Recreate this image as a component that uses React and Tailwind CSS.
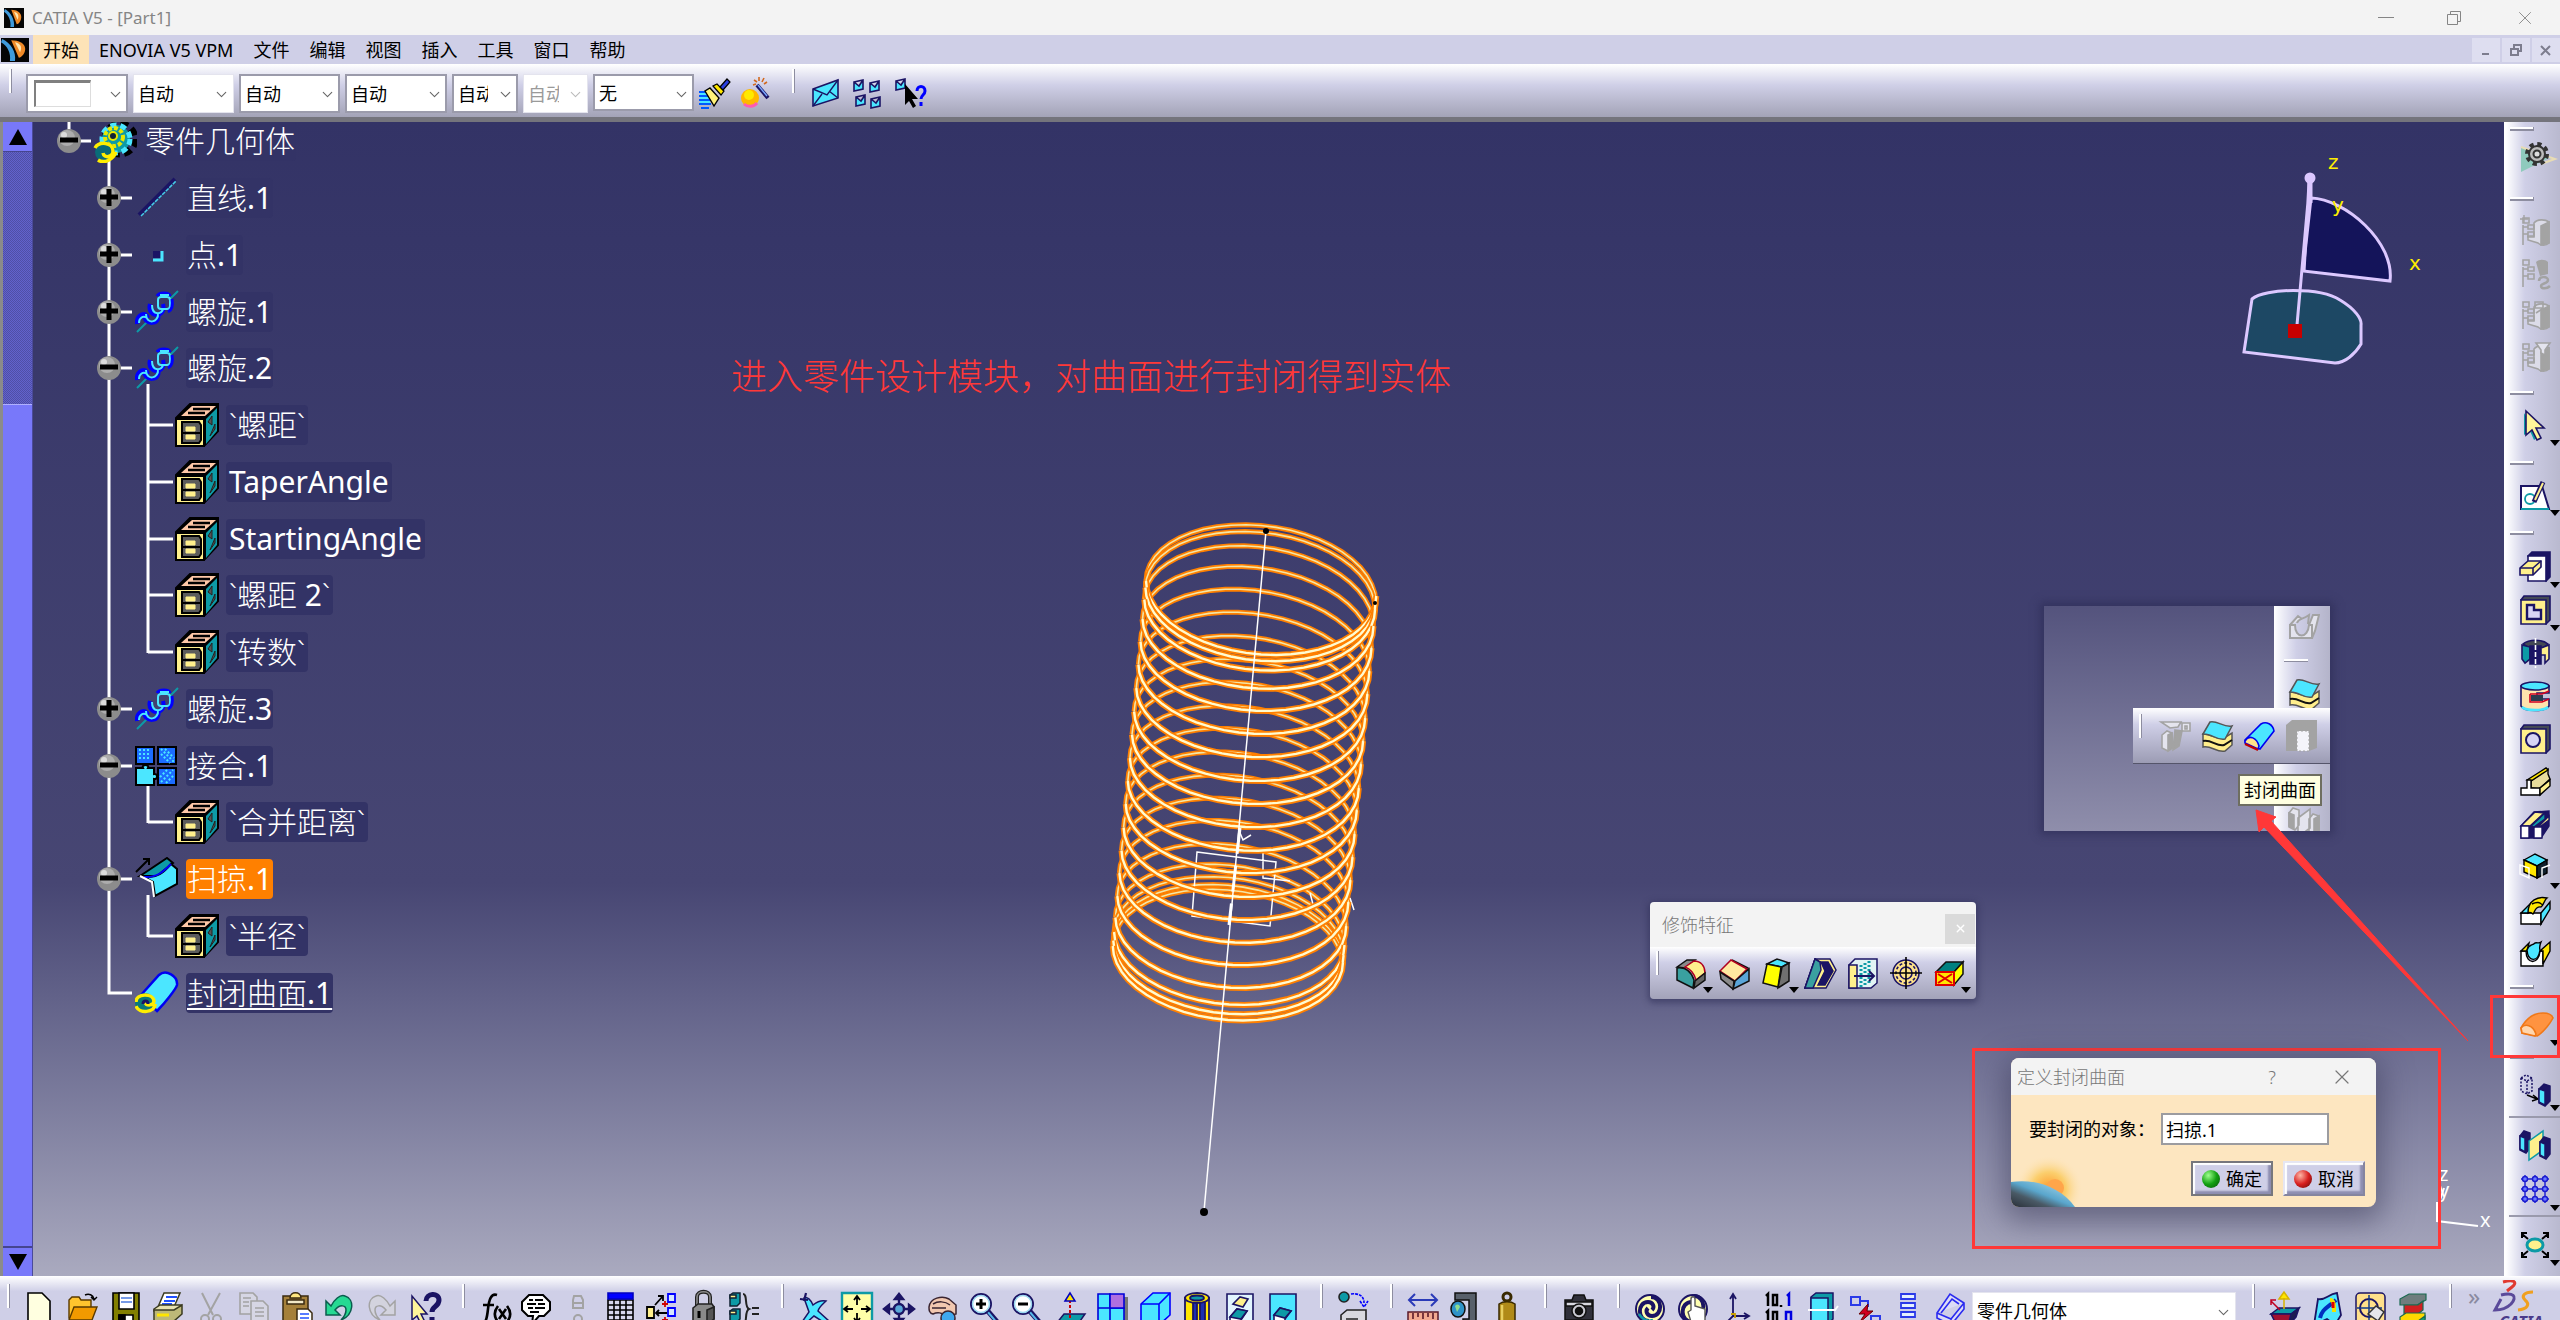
import { ChevronDown, X } from 'lucide-react'

const N = '#1b1464'
const CYAN = '#4be6ff'
const CREAM = '#fff08c'
const TEAL = '#0d9aa6'
const GREY = '#a3a3a3'

const spec = (
  <g fill="none" stroke={GREY} strokeWidth="1.6">
    <path d="M4 3h6v5H4zM4 10v20M4 19h5M4 12h5M9 10h6v4H9zM9 17h6v5H9z" />
  </g>
)

const body = (
  <g stroke={GREY} strokeWidth="1.6">
    <path d="M15 8c3-4 11-4 15-1v21c-3 3-8 3-11 0l-10-3v-4h6z" fill="#dcdce8" />
    <path d="M22 11l8-4v21l-8 2z" fill={GREY} />
  </g>
)

// 32 x 32 drawings
const icons = {
  brush: (
    <g>
      <path d="M1 15h12M1 19h13M1 23h15M1 27h12M3 31h8" stroke="#0059ff" strokeWidth="2" />
      <path d="M2 17h9M2 21h10M2 25h10" stroke={CYAN} strokeWidth="2" />
      <path d="M12 11l9 10-5 8-9-15z" fill="#fff27a" stroke="#000" strokeWidth="1.4" />
      <path d="M15 9l8 9 3-4-7-7z" fill="#ffe600" stroke="#000" strokeWidth="1.2" />
      <path d="M22 10l7-8 3 3-7 8z" fill="#2a3fe0" stroke="#000" strokeWidth="1.2" />
    </g>
  ),
  wand: (
    <g>
      <circle cx="11" cy="21" r="9" fill="#ffb800" />
      <circle cx="10" cy="18" r="5" fill="#ffea00" />
      <path d="M5 27a9 9 0 0 0 13-1" stroke="#ff5cb0" strokeWidth="3" fill="none" />
      <path d="M18 8l11 13" stroke={N} strokeWidth="4" />
      <path d="M19 8l9 11" stroke="#7aa8ff" strokeWidth="1.4" />
      <path d="M15 3l3 2M20 0v4M25 1l-2 4M28 5l-3 2M14 8l3-1" stroke="#d2691e" strokeWidth="1.6" />
    </g>
  ),
  mail: (
    <g>
      <path d="M3 12L28 3v18L3 29z" fill={CYAN} stroke={N} strokeWidth="1.6" />
      <path d="M3 12l14 6L28 3M3 29l9-12M28 21l-9-7" fill="none" stroke={N} strokeWidth="1.4" />
    </g>
  ),
  mailGrid: (
    <g fill={CYAN} stroke={N} strokeWidth="1.6">
      <path d="M2 5l9-2v9l-9 2zM2 5l5 4 4-6M18 6l9-2v9l-9 2zM18 6l5 4 4-6M4 20l9-2v9l-9 2zM4 20l5 4 4-6M19 22l9-2v9l-9 2zM19 22l5 4 4-6" />
    </g>
  ),
  mailHelp: (
    <g>
      <path d="M2 4l9-2v9l-9 2zM2 4l5 4 4-6" fill={CYAN} stroke={N} strokeWidth="1.6" />
      <path d="M11 7v21l4-4 4 7 3-2-4-7h6z" fill="#000" />
      <path d="M23 14c0-6 8-6 8 0 0 4-4 4-4 8M27 25v4" fill="none" stroke="#0000ff" strokeWidth="3" />
    </g>
  ),
  gear: (
    <g>
      <path d="M2 6l30 10L2 31z" fill="#8fcabd" />
      <path d="M2 6l34 12-14 5" fill="none" stroke="#e8dcb4" strokeWidth="2" />
      <circle cx="18" cy="13" r="10" fill="none" stroke="#333" strokeWidth="4" strokeDasharray="4.2 3.65" />
      <circle cx="18" cy="13" r="8" fill="#bbb" stroke="#333" strokeWidth="2" />
      <circle cx="18" cy="13" r="3.5" fill="#ddd" stroke="#333" strokeWidth="2" />
    </g>
  ),
  specNew: <g>{body}{spec}<path d="M1 4h8M5 0v8" stroke={GREY} strokeWidth="1.4" /></g>,
  specLink: <g>{spec}<path d="M17 5c3-3 9-3 12 0v12l-8 2z" fill={GREY} /><path d="M20 24c0-5 9-5 9-1s-7 3-7 6 6 3 9 0" fill="none" stroke={GREY} strokeWidth="2.5" /></g>,
  specBox: <g>{body}{spec}<path d="M16 3h8v6h-8zM17 14l6-4h7" fill="none" stroke={GREY} strokeWidth="1.6" /></g>,
  specFilter: <g>{body}{spec}<path d="M17 2h14l-5 7v5l-4-2V9z" fill="#e4e4ee" stroke={GREY} strokeWidth="1.6" /></g>,
  cursor: (
    <g>
      <path d="M5 4v22l6-4 4 9 4-3" fill={TEAL} />
      <path d="M7 2l18 17h-8l5 10-4 2-5-10-6 5z" fill="#fff59a" stroke={N} strokeWidth="1.6" />
    </g>
  ),
  sketch: (
    <g>
      <path d="M2 7h21l7 23H2z" fill="#fff" stroke={N} strokeWidth="2" />
      <path d="M2 30h28" stroke={TEAL} strokeWidth="2" />
      <circle cx="11" cy="20" r="5" fill="none" stroke={TEAL} strokeWidth="1.8" />
      <path d="M15 23l9-20" stroke={N} strokeWidth="5" />
      <path d="M16 21l8-17" stroke={CREAM} strokeWidth="2" />
    </g>
  ),
  pad: (
    <g stroke={N} strokeWidth="1.6">
      <path d="M9 5l4-4h18v25l-4 4z" fill={N} />
      <path d="M9 5h18v25H9z" fill="#fff" />
      <path d="M1 17l8-7h13v6l-8 8H1z" fill={CREAM} />
      <path d="M1 17h13l8-7M14 17v7" fill="none" />
    </g>
  ),
  pocket: (
    <g stroke={N} strokeWidth="1.6">
      <path d="M2 6l3-4h26v24l-4 4z" fill="#444a55" />
      <path d="M2 6h25v24H2z" fill={CREAM} />
      <path d="M8 11h7v5h7v9H8z" fill="#d8d4f4" strokeWidth="2.4" />
    </g>
  ),
  shaft: (
    <g stroke={N} strokeWidth="1.6">
      <path d="M4 7c6-5 19-5 25 0l-5 4h-14z" fill="#444a55" />
      <path d="M3 8l8 2v12l-5 4-3-4z" fill={TEAL} />
      <path d="M11 9h11v18H11z" fill={N} />
      <path d="M22 11l8-3v14l-4 4v-8h-4z" fill={CREAM} />
      <path d="M16.500 1v30" stroke="#fff" strokeDasharray="5 2" />
    </g>
  ),
  groove: (
    <g strokeWidth="1.6">
      <path d="M2 6v20c4 6 24 6 28 0v-7H18v-6h12V6z" fill="#ffe3ad" stroke={N} />
      <ellipse cx="16" cy="6" rx="14" ry="4" fill={CYAN} stroke={N} />
      <path d="M11 14h12l7-3M11 14v8h12l7-3" fill="none" stroke="#d00020" />
      <path d="M12 15h12v6H12z" fill="#2b3b50" />
      <path d="M3 27c4 4 22 4 26 0" fill="none" stroke={CYAN} strokeWidth="2.5" />
    </g>
  ),
  hole: (
    <g stroke={N} strokeWidth="1.6">
      <path d="M2 6l3-4h26v24l-4 4z" fill="#444a55" />
      <path d="M2 6h25v24H2z" fill={CREAM} />
      <circle cx="14" cy="17" r="7" fill="#d8d4f4" strokeWidth="2" />
    </g>
  ),
  rib: (
    <g strokeWidth="1.4" stroke="#000">
      <path d="M12 15L29 3v5l2 5-11 10-8-1z" fill="#e8dc9c" />
      <path d="M8 14L27 2l2 2-17 11z" fill="#ffe600" />
      <path d="M2 22h6v-8h4v8h9v7H2z" fill="#fff" />
      <path d="M21 22l10-8v6L21 29z" fill={CREAM} />
    </g>
  ),
  slot: (
    <g strokeWidth="1.4" stroke={N}>
      <path d="M2 17L15 3l15-1v15L22 29H2z" fill={N} />
      <path d="M2 17L16 3l9 1-14 13zM21 16l9-9v4l-9 7z" fill={CREAM} />
      <path d="M2 17h8v12H2zM15 18h8v11h-8z" fill="#fff" />
      <path d="M12 17L26 4v6L15 18z" fill={TEAL} />
    </g>
  ),
  solidCombine: (
    <g strokeWidth="1.4" stroke="#000">
      <path d="M5 8l11-6 12 6-10 6z" fill={CYAN} />
      <path d="M5 8l13 6v12L5 20z" fill="#ffe600" />
      <path d="M28 8l-10 6v12l10-5z" fill="#10202c" />
      <path d="M1 13l9 3v10l-9-4zM31 13l-8 3v10" fill="none" stroke="#fff" />
    </g>
  ),
  multiPad: (
    <g strokeWidth="1.4" stroke="#000">
      <path d="M2 18h20v11H2z" fill="#fff" />
      <path d="M2 18L12 8l3 3-6 7zM22 18l9-11v7l-9 15z" fill={CYAN} />
      <path d="M9 18c0-13 10-17 19-15-3 2-3 7-6 9-6-1-6 5-8 7-2-2-3-2-5-1z" fill="#ffe600" />
      <path d="M13 9c6-3 8-1 11 1" fill="none" />
    </g>
  ),
  removePad: (
    <g strokeWidth="1.4" stroke="#000">
      <path d="M2 13h5c0 14 13 14 14 0h3v15H2z" fill="#fff" />
      <path d="M2 13l8-8-2 8zM21 13l10-9v9l-7 13V13z" fill="#ffe600" />
      <path d="M8 12c2-6 5-4 8-7 3-1 3 1 6-1-2 5-1 8-1 8-2 13-12 12-13 0z" fill={CYAN} />
    </g>
  ),
  closeSurfaceHot: (
    <g stroke="#f07818" strokeWidth="1.6">
      <path d="M2 19C7 10 15 4 24 4c5 0 9 2 10 5-2 4-9 14-16 18L3 24z" fill="#ff9340" />
      <path d="M2 19c4-5 12-3 15 6l-1 2L3 24z" fill="#ffd6ae" />
    </g>
  ),
  translate: (
    <g strokeWidth="1.5" stroke={N}>
      <path d="M2 4l5-3 6 3v13l-5 3-6-3zM2 4l6 3 5-3M8 7v13" fill="none" strokeDasharray="2 1.500" />
      <path d="M8 21l10 4m-4-4l5 4-6 2" fill="none" stroke="#000" />
      <path d="M20 15l5-5 6 2v15l-5 5-6-3z" fill={N} />
      <path d="M20 15l6 2v14l-6-3z" fill={CYAN} />
    </g>
  ),
  mirror: (
    <g strokeWidth="1.5" stroke={N}>
      <path d="M1 7l4-5 6 2v15l-4 5-6-3z" fill={N} />
      <path d="M1 7l5 2v14l-5-3z" fill={CYAN} />
      <path d="M10 12l14-10v19L10 31z" fill={CREAM} stroke={TEAL} />
      <path d="M21 13l4-5 6 2v15l-4 5-6-3z" fill={N} />
      <path d="M21 13l5 2v14l-5-3z" fill={CYAN} />
    </g>
  ),
  pattern: (
    <g stroke="#1b1bd0" strokeWidth="1.4" fill="#6b7bff">
      <path d="M2 6h28M2 16h28M2 26h28M6 2v28M16 2v28M26 2v28" />
      {[6, 16, 26].map(x => [6, 16, 26].map(y => <circle key={`${x}-${y}`} cx={x} cy={y} r="2.5" />))}
    </g>
  ),
  scale: (
    <g>
      <ellipse cx="16" cy="16" rx="8" ry="6" fill={CREAM} stroke={TEAL} strokeWidth="3" />
      <path d="M9 10L3 5m0 4V4h5M23 10l6-5m-5-1h5v5M9 22l-6 5m0-4v5h5M23 22l6 5m-5 1h5v-5" fill="none" stroke="#000" strokeWidth="2" />
    </g>
  ),
  file: <path d="M4 1h14l8 8v24H4z" fill="#ffffe0" stroke="#000" strokeWidth="1.6" />,
  open: (
    <g stroke="#5a3a00" strokeWidth="1.4">
      <path d="M2 8l3-3h7l2 3h10v18H2z" fill="#ffc42e" />
      <path d="M7 15h23l-5 13H2z" fill="#f29a00" />
      <path d="M18 3c4-2 8 0 9 4m-3-2l3 3 3-3" fill="none" stroke="#000" />
    </g>
  ),
  save: (
    <g stroke="#000" strokeWidth="1.6">
      <path d="M3 1h26v32H3z" fill="#827f00" />
      <path d="M9 1h15v16H9z" fill="#fff" />
      <path d="M11 6h11M11 10h11" stroke="#4a7adf" />
      <path d="M9 23h14v9H9z" fill="#fff" />
      <path d="M9 23h6v9H9z" fill="#000" />
    </g>
  ),
  print: (
    <g stroke="#3a3a20" strokeWidth="1.5">
      <path d="M12 1h16l-6 14H6z" fill="#fff" />
      <path d="M14 5h11M12 9h11M10 12h10" stroke="#2050ff" strokeWidth="2" />
      <path d="M2 17l6-4h21l-3 6H2z" fill="#e6e0b0" />
      <path d="M2 18h20l8-5v9l-8 7H2z" fill="#bdb878" />
      <path d="M5 23h12" stroke="#ffe600" strokeWidth="3" />
    </g>
  ),
  cut: (
    <g fill="none" stroke={GREY} strokeWidth="2">
      <path d="M7 1l11 22M25 1L13 23" />
      <circle cx="10" cy="27" r="4" />
      <circle cx="22" cy="27" r="4" />
    </g>
  ),
  copy: (
    <g fill="#d6d6e4" stroke={GREY} strokeWidth="1.6">
      <path d="M2 1h13l4 4v17H2z" />
      <path d="M13 9h12l5 5v18H13zM17 16h9M17 20h9M17 24h9M5 6h8M5 10h6M5 14h6" />
    </g>
  ),
  paste: (
    <g stroke="#3a2a10" strokeWidth="1.5">
      <path d="M2 4h25v25H2z" fill="#a5803a" />
      <path d="M9 6c0-7 11-7 11 0z" fill="#ffe680" />
      <path d="M6 8h17v4H6z" fill="#f2e9c8" />
      <path d="M16 17h11l4 4v12H16z" fill="#fff" />
      <path d="M19 22h9M19 26h9" stroke="#2050ff" />
    </g>
  ),
  undo: <path d="M3 9v14h14l-5-5c5-6 11-5 11 0 0 4-2 7-5 10 13-5 14-21 4-24-5-2-11 4-14 10z" fill="#26d993" stroke="#0a5c4e" strokeWidth="1.5" />,
  redo: <path d="M29 9v14H15l5-5c-5-6-11-5-11 0 0 4 2 7 5 10C1 23 0 7 10 4c5-2 11 4 14 10z" fill="#d3d3de" stroke={GREY} strokeWidth="1.5" />,
  help: (
    <g>
      <path d="M3 4v24l5-4 4 8 4-2-4-8h6z" fill="#fff59a" stroke={N} strokeWidth="1.5" />
      <path d="M17 9c0-8 13-9 13-1 0 7-7 6-7 12M23 25v5" fill="none" stroke={N} strokeWidth="5" />
    </g>
  ),
  formula: (
    <g fill="none" stroke="#000" strokeWidth="2.600">
      <path d="M2 31c5 1 6-5 7-14S12 1 18 3M4 13h11M19 14c-4 5-4 11 0 16M28 14c4 5 4 11 0 16" />
      <path d="M20 17l7 10M27 17l-7 10" />
    </g>
  ),
  comment: (
    <g>
      <path d="M9 3h14l7 7v8l-6 6h-5l-7 8 1-8H8l-6-6v-8z" fill="#fff" stroke="#000" strokeWidth="2" />
      <path d="M9 8h4m2 0h8M7 12h9m2 0h7M8 16h5m2 0h10M10 20h9" stroke="#000" strokeWidth="1.8" />
    </g>
  ),
  linkGrey: <g fill="none" stroke={GREY} strokeWidth="2"><path d="M12 4h7l2 4v8H11V8zM11 11h10" /><circle cx="16" cy="27" r="4" /></g>,
  table: (
    <g stroke="#000" strokeWidth="1.6">
      <path d="M4 8h25v24H4z" fill="#d8d8ee" />
      <path d="M4 1h25v6H4z" fill="#0000ff" stroke="#0000c0" />
      <path d="M4 13h25M4 18h25M4 23h25M4 28h25M10 8v24M16 8v24M22 8v24" />
    </g>
  ),
  relations: (
    <g strokeWidth="1.8" stroke="#0000ff" fill="#d6e8ff">
      <path d="M23 2h7v8h-7zM23 16h7v8h-7zM23 29h7v6h-7z" />
      <path d="M2 15h7v11H2z" fill={CREAM} stroke="#000" />
      <path d="M10 13l8-9M13 4h5v5M11 21h11M14 18l-3 3 3 3" stroke="#000" fill="none" />
      <path d="M17 12h6M20 9v6M17 28h6M20 25v6" stroke="#d00000" />
    </g>
  ),
  lock: (
    <g stroke="#222" strokeWidth="1.6">
      <path d="M10 14V5c0-7 13-7 13 0v10" fill="none" strokeWidth="4" />
      <path d="M10 14V5c0-7 13-7 13 0v10" fill="none" stroke="#8a8a8a" />
      <path d="M6 16l5-4h14l2 3v12l-7 6-14-3z" fill="#8a8a8a" />
      <path d="M20 18l7-3v12l-7 6z" fill="#555" />
      <path d="M12 19v7" stroke="#000" strokeWidth="3" />
    </g>
  ),
  equiv: (
    <g strokeWidth="1.5" stroke="#123">
      <path d="M2 3l3-2h7v10l-3 3H2zM2 19l3-2h7v10l-3 3H2z" fill={TEAL} />
      <path d="M2 3h6v3H2zM2 19h6v3H2z" fill={CREAM} />
      <path d="M15 2c5 0 1 13 6 15-5 2-1 15-6 16M24 16h7M24 22h7" fill="none" stroke="#222" strokeWidth="2" />
    </g>
  ),
  plane: (
    <g stroke={N} strokeWidth="1.5">
      <path d="M6 6c3-2 7 2 9 7 5-4 9-5 13-4-3 3-7 6-8 10l11 10-4 2-11-7-9 8-3-2 7-10z" fill={CYAN} />
      <path d="M2 7l8 1M8 1L6 9" strokeWidth="2.200" />
    </g>
  ),
  fitAll: (
    <g>
      <path d="M1 1h30v32H1z" fill="#ffffa8" stroke={TEAL} strokeWidth="2.400" />
      <path d="M16 5v8m-3-5l3-4 3 4M16 29v-8m-3 5l3 4 3-4M4 17h8m-5-3l-4 3 4 3M28 17h-8m5-3l4 3-4 3" fill="none" stroke="#000" strokeWidth="1.8" />
    </g>
  ),
  pan: (
    <g fill="none" stroke={N} strokeWidth="2.400">
      <path d="M16 3v28M2 17h28M12 7l4-5 4 5zM12 27l4 5 4-5zM6 13l-5 4 5 4zM26 13l5 4-5 4z" fill={N} />
      <circle cx="16" cy="17" r="5" fill="#5aa8d8" />
    </g>
  ),
  rotate: (
    <g stroke="#3a2430" strokeWidth="1.5">
      <path d="M3 15c1-9 13-12 20-8l7 6v9l-11 3c-2-5-8-5-12-3-4-1-4-4-4-7z" fill="#f2c8b0" />
      <path d="M6 16h14M7 12c5-3 12-3 17 1" fill="none" />
      <circle cx="22" cy="26" r="7" fill="#3fa8ee" />
    </g>
  ),
  zoomIn: <Magnifier plus />,
  zoomOut: <Magnifier />,
  normal: (
    <g>
      <path d="M2 32l8-10h21l-7 10z" fill={TEAL} stroke={N} strokeWidth="1.5" />
      <path d="M16 26V8" stroke="#d00000" strokeWidth="2" strokeDasharray="3 2" />
      <path d="M11 9l5-8 5 8z" fill="#ffe600" stroke="#0000c0" strokeWidth="1.5" />
    </g>
  ),
  multiView: (
    <g stroke="#0000d8" strokeWidth="1.6">
      <path d="M6 5h26v29H6z" fill="#777" stroke="none" />
      <path d="M2 2h12v14H2zM2 16h12v14H2zM14 16h14v14H14z" fill={CYAN} />
      <path d="M14 2h14v14H14z" fill="#b070e0" />
    </g>
  ),
  isoView: (
    <g stroke="#0000ff" strokeWidth="1.6" fill={CYAN}>
      <path d="M2 12L14 1h17v22L20 33H2z" />
      <path d="M2 12h18v21M20 12L31 1" fill="none" />
    </g>
  ),
  shading: (
    <g stroke={N} strokeWidth="1.8">
      <path d="M4 6v22c4 6 20 6 24 0V6z" fill="#ffe600" />
      <path d="M12 10h4v22h-4zM19 10h5v21h-5z" fill="#1b2fb0" />
      <ellipse cx="16" cy="6" rx="12" ry="5" fill="#ffe600" />
      <ellipse cx="16" cy="6" rx="7" ry="2.500" fill={TEAL} />
    </g>
  ),
  hideShow: (
    <g stroke={N} strokeWidth="1.6">
      <path d="M3 2h26v31H3z" fill="#e2f5ff" />
      <path d="M9 12l7-7 8 2-5 8z" fill={CREAM} />
      <path d="M6 25l7-8 10 2-6 9v4H6z" fill="#fff" />
      <path d="M6 25l7-8 10 2-6 8z" fill={TEAL} />
    </g>
  ),
  swapSpace: (
    <g stroke={N} strokeWidth="1.6">
      <path d="M3 2h26v31H3z" fill={CYAN} />
      <path d="M7 23l6-7 11 3-6 8v5H7z" fill="#fff" />
      <path d="M7 23l6-7 11 3-6 7z" fill={TEAL} />
    </g>
  ),
  plot: (
    <g stroke="#222" strokeWidth="1.6">
      <circle cx="7" cy="5" r="5" fill={TEAL} />
      <path d="M14 2c8-1 13 2 13 9m-4-2l4 6 4-6" fill="none" stroke="#0000ff" strokeDasharray="3 1" />
      <path d="M4 23l6-5h19v10l-6 6H4zM9 27h12" fill="#d8d8de" />
    </g>
  ),
  measure: (
    <g>
      <path d="M3 8h26M8 2L2 8l6 6M24 2l6 6-6 6" fill="none" stroke="#2a3ab8" strokeWidth="2" />
      <path d="M1 20h30v13H1z" fill="#f2a890" stroke="#5a1a2a" strokeWidth="1.5" />
      <path d="M6 21v6M11 21v4M16 21v6M21 21v4M26 21v6" stroke="#5a1a2a" strokeWidth="1.6" />
    </g>
  ),
  caliper: (
    <g stroke="#111" strokeWidth="1.5">
      <path d="M6 1h21v28h4v4H14v-6h6V8H6z" fill="#58606a" />
      <ellipse cx="9" cy="17" rx="7" ry="8" fill="#2f93c8" />
      <path d="M6 14c2-2 4-2 5 1l-3 5z" fill="#8fdc8f" stroke="none" />
    </g>
  ),
  weight: (
    <g stroke="#3a2a00" strokeWidth="1.5">
      <circle cx="16" cy="5" r="4" fill="none" strokeWidth="3" />
      <path d="M8 12c4-3 12-3 16 0v20H8z" fill="#b08a18" />
      <path d="M11 13v19" stroke="#e8cf60" strokeWidth="2.500" />
    </g>
  ),
  camera: (
    <g stroke="#111" strokeWidth="1.5">
      <path d="M2 8h7l2-5h10l2 5h7v20H2z" fill="#30303a" />
      <path d="M3 10h26v4H3z" fill="#d8d8e0" />
      <circle cx="16" cy="19" r="7" fill="#c8c8d0" />
      <circle cx="16" cy="19" r="3.500" fill="#111" />
    </g>
  ),
  update: (
    <g fill="none" strokeWidth="5">
      <circle cx="16" cy="17" r="14" fill="#ffffb0" stroke={N} strokeWidth="2" />
      <path d="M17 5c12 0 12 19 1 19-5 0-7-5-4-8M15 29C3 29 3 10 14 10c5 0 7 5 4 8" stroke={N} strokeWidth="4" />
      <path d="M5 22c4 6 9 8 14 6" stroke={TEAL} strokeWidth="2.500" />
    </g>
  ),
  updateHand: (
    <g fill="none">
      <circle cx="16" cy="17" r="14" fill="#ffffb0" stroke={N} strokeWidth="2" />
      <path d="M17 4c12 0 13 20 0 20M15 30C3 30 2 10 15 10" stroke={N} strokeWidth="4" />
      <path d="M11 20l3-2V7c0-3 4-3 4 0v7l10 3v12l-3 4H15z" fill="#fff" stroke="#555" strokeWidth="1.4" />
    </g>
  ),
  axis: (
    <g fill="none" stroke={N} strokeWidth="1.8">
      <path d="M13 24V3m-3 4l3-5 3 5M13 24h15m-4-3l5 3-5 3M13 24l-9 9" />
      <path d="M11 22h4v4" stroke="#c8a000" />
    </g>
  ),
  tolerance: (
    <g fill="none" stroke="#000" strokeWidth="2.500">
      <path d="M3 4l2-2v12M10 3h4v10h-4zM18 13v2M3 21l2-2v13M10 20h4v12h-4z" />
      <path d="M24 4l2-2v12M23 20h5v12h-5zM18 30v3" stroke="#0000e0" />
    </g>
  ),
  catalog: (
    <g stroke={N} strokeWidth="1.5">
      <path d="M5 5l5-4h17v26l-5 5H5z" fill={TEAL} />
      <path d="M5 6h17v25H5z" fill={CYAN} />
      <path d="M2 18h27l3-4" fill="none" stroke="#fff" strokeWidth="2" />
    </g>
  ),
  flash: (
    <g fill="none" strokeWidth="2">
      <path d="M2 5h9v8H2zM22 24h9v7h-9zM11 9h8v6M12 29h10" stroke="#2a3ae8" />
      <path d="M19 12l-9 10h6l-6 9 14-12h-6z" fill="#d00020" stroke="#600" strokeWidth="1" />
    </g>
  ),
  stack: (
    <g fill="#e4f0ff" stroke="#2a3ae8" strokeWidth="1.8">
      <path d="M9 2h14v5H9zM9 11h14v5H9zM9 20h14v5H9zM9 29h14v5H9z" />
    </g>
  ),
  bodyBlue: (
    <g fill="#dcdcf6" stroke="#2a2af0" strokeWidth="1.6">
      <path d="M2 21L15 2l14 9v6L16 33 2 26zM2 21l14 6 13-16M16 27v6" />
      <path d="M6 21l11-14 7 5" fill="none" />
    </g>
  ),
  draftUp: (
    <g strokeWidth="1.5" stroke={N}>
      <path d="M2 22l8-6h20l-8 6z" fill={TEAL} />
      <path d="M2 22h20v7l-6 5H8z" fill="#a01030" />
      <path d="M22 22l8-6-3 9-8 9z" fill="#1b1b50" />
      <path d="M15 17V6M10 7l5-7 5 7z" fill="#ffe600" stroke="#d8b400" />
      <path d="M11 18L2 9m0 4V8h5" fill="none" stroke="#c00020" />
    </g>
  ),
  curvature: (
    <g>
      <path d="M7 7c7 2 10-5 19-6l4 22-6 10-8-6-13 6z" fill={CYAN} stroke={N} strokeWidth="1.8" />
      <path d="M9 26c2-9 7-10 16-18" fill="none" stroke="#0030c0" strokeWidth="4" />
      <path d="M19 8c5 0 4 9 4 12" fill="none" stroke="#f0e000" strokeWidth="4" />
      <path d="M22 10v6" stroke="#e00000" strokeWidth="3" />
    </g>
  ),
  analysis: (
    <g fill="none">
      <rect x="2" y="1" width="29" height="32" rx="4" fill="#ffe08a" stroke={N} strokeWidth="1.5" />
      <circle cx="15" cy="16" r="9" stroke={N} strokeWidth="2" />
      <path d="M15 3v26M3 16h25" stroke="#123a8a" strokeWidth="1.5" />
      <path d="M14 22l8-8 8 6-6 9z" fill="#e6e6ea" stroke="#333" strokeWidth="1.500" />
    </g>
  ),
  wallThickness: (
    <g stroke="#1a6a50" strokeWidth="1.2">
      <path d="M4 7l9-5h17v6l-9 5H4z" fill="#6f7d7d" />
      <path d="M8 13h14l5-4v9l-5 4H8z" fill="#d02020" />
      <path d="M4 25l6-4h19v6l-7 5H4z" fill="#ffd800" />
      <path d="M4 29h18l7-5v6l-6 4H4z" fill="#18a070" />
    </g>
  ),
  fillet: (
    <g stroke="#111" strokeWidth="1.5">
      <path d="M2 10L12 3h8L10 11z" fill="#8a8a8a" />
      <path d="M2 11c8-1 14 3 17 12l-1 8L2 23z" fill="#3aa0a0" />
      <path d="M10 10l9-6c7 0 11 5 11 12l-9 7c-2-7-5-11-11-13z" fill={CREAM} stroke="#b00020" />
      <path d="M20 24l10-8v7l-11 8z" fill="#666" />
    </g>
  ),
  chamfer: (
    <g stroke="#111" strokeWidth="1.5">
      <path d="M14 3l16 8v3L19 7z" fill="#9a9a9a" />
      <path d="M2 14L13 3l16 9-12 12z" fill="#ffe9a0" stroke="#b00020" />
      <path d="M17 24l14-12v12L15 32z" fill="#5aa5d8" />
      <path d="M2 15l14 9-1 8L3 22z" fill="#8a8a8a" />
    </g>
  ),
  draft: (
    <g stroke="#111" strokeWidth="1.5">
      <path d="M6 7l10-5 12 4-7 4z" fill={CYAN} />
      <path d="M6 7l14 3-3 20-15-4z" fill="#ffff00" />
      <path d="M21 10l7-4v18l-11 7z" fill="#707070" />
    </g>
  ),
  shell: (
    <g stroke={N} strokeWidth="1.5">
      <path d="M11 2h15l6 11-10 18H1z" fill={CREAM} />
      <path d="M11 2l5 3-9 25-6 1z" fill="#3aa0a0" />
      <path d="M11 2l5 3 1 8-8 18H1z" fill="#3aa0a0" />
      <path d="M17 5h7l5 9-8 14h-7l7-14z" fill={N} />
    </g>
  ),
  thickness: (
    <g stroke={N} strokeWidth="1.5">
      <path d="M2 8l6-6h22v24l-6 5H2z" fill="#e2f4f4" />
      <path d="M2 8h8v23H2z" fill={CREAM} />
      <path d="M14 8v22M18 6v23M22 4v24" stroke={TEAL} strokeDasharray="2 2" strokeWidth="3" />
      <path d="M7 19h20m-5-5l5 5-5 5" fill="none" strokeWidth="2" />
    </g>
  ),
  thread: (
    <g fill="none" stroke={N} strokeWidth="1.6">
      <circle cx="16" cy="16" r="13" fill="#ffe38a" />
      <circle cx="16" cy="16" r="6" />
      <circle cx="16" cy="16" r="10" strokeDasharray="3 2" />
      <path d="M16 0v32M0 16h32" stroke="#000" />
    </g>
  ),
  removeFace: (
    <g stroke="#111" strokeWidth="1.5">
      <path d="M3 15L13 5h17l-9 10z" fill="#008080" />
      <path d="M3 15h18v13H3z" fill="#ffe600" />
      <path d="M21 15l9-10v12l-9 11z" fill="#ffff00" />
      <path d="M5 17l14 9M19 17L5 26M3 15h18v13H3z" fill="none" stroke="#e00000" strokeWidth="2" />
    </g>
  ),
  split: (
    <g fill="#e4e4ee" stroke={GREY} strokeWidth="1.6">
      <path d="M2 2h20l-3 5-8 1zM23 3h8v8h-8zM26 6h2v3h-2z" />
      <path d="M3 15l5-4 5 2v15l-4 3-6-3z" />
      <path d="M9 15l4-2v15l-4 3zM16 10l7 1-3 15-6 4z" fill={GREY} />
    </g>
  ),
  thickSurface: (
    <g stroke="#555" strokeWidth="1.5">
      <path d="M2 14c7-1 13 6 21 4l8-5v12l-7 6c-8 2-14-6-22-4z" fill="#ffee8c" />
      <path d="M2 21c8-2 14 6 21 4l8-5" fill="none" stroke="#111" strokeWidth="2" />
      <path d="M2 14L9 2c7-2 14 6 22 4l-7 13c-8 2-14-6-22-5z" fill={CYAN} />
    </g>
  ),
  closeSurface: (
    <g stroke="#0000f0" strokeWidth="1.6">
      <path d="M2 20L18 4c5-3 12 0 13 7L17 29 3 24z" fill={CYAN} />
      <path d="M2 21c4-7 12-3 14 5l-1 3L2 23z" fill="#ffe38a" />
      <path d="M2 24l13 6" stroke="#c00000" strokeWidth="2" />
    </g>
  ),
  sew: (
    <g>
      <path d="M1 5l6-5h25v28l-8 3V11H12v20H1z" fill={GREY} />
      <path d="M12 11h12v20H12z" fill="#f4f4fa" stroke={GREY} strokeDasharray="2 2" />
    </g>
  ),
}

function Magnifier({ plus }) {
  return (
    <g>
      <path d="M17 17l13 15" stroke={N} strokeWidth="5" />
      <path d="M18 19l11 13" stroke="#56b8e8" strokeWidth="2" />
      <circle cx="12" cy="12" r="10" fill="#fff" stroke={N} strokeWidth="2" />
      <circle cx="12" cy="12" r="8.500" fill="none" stroke="#9ad8f0" strokeWidth="1.5" />
      <path d={plus ? 'M7 12h10M12 7v10' : 'M7 12h10'} stroke="#000" strokeWidth="3" />
    </g>
  )
}

function Icon({ name, className = 'w-8 h-8' }) {
  return (
    <svg viewBox="0 0 32 32" className={`${className} shrink-0 overflow-visible`} aria-hidden="true">
      {icons[name]}
    </svg>
  )
}

function Tool({ name, className = 'w-[42px] h-[42px]', menu }) {
  return (
    <button type="button" aria-label={name} className={`${className} relative flex shrink-0 items-center justify-center`}>
      <Icon name={name} />
      {menu && <span className="absolute -right-1 bottom-0 border-x-[5px] border-t-[6px] border-x-transparent border-t-black" />}
    </button>
  )
}

function AppMark({ className }) {
  return (
    <svg viewBox="0 0 22 22" preserveAspectRatio="none" className={className} aria-hidden="true">
      <path d="M0 0h22v22H0z" fill="#050505" />
      <path d="M8 2c6 0 11 3 11 8 0 4-3 8-5 8z" fill="#f08a28" />
      <path d="M11 4c4 1 6 4 4 9z" fill="#ffe7b0" />
      <path d="M1 1c7 4 11 12 10 20H7C8 14 5 7 0 4z" fill="#3f9bdc" />
    </svg>
  )
}

const menus = ['ENOVIA V5 VPM', '文件', '编辑', '视图', '插入', '工具', '窗口', '帮助']

function TitleBar() {
  return (
    <header className="flex h-[35px] shrink-0 items-center bg-[#f3f3f3] pl-1 text-[#858585]">
      <AppMark className="h-5 w-5" />
      <h1 className="ml-2 text-[17px] font-normal">CATIA V5 - [Part1]</h1>
      <div className="ml-auto flex items-center gap-[52px] pr-6">
        <button type="button" aria-label="最小化" className="w-4">
          <span className="block h-px bg-[#858585]" />
        </button>
        <button type="button" aria-label="还原">
          <svg viewBox="0 0 16 16" className="h-4 w-4" fill="none" stroke="#858585">
            <path d="M1.500 4.500h10v10h-10zM4.500 4.500v-3h10v10h-3" />
          </svg>
        </button>
        <button type="button" aria-label="关闭">
          <X size={22} strokeWidth={1} />
        </button>
      </div>
    </header>
  )
}

function MenuBar() {
  return (
    <nav className="flex h-[29px] shrink-0 items-center bg-[#cfcfe7] text-lg text-black">
      <AppMark className="ml-px h-6 w-7" />
      <button type="button" className="ml-1 h-full bg-[#fde3b7] px-[10px]">开始</button>
      <div className="flex items-center">
        {menus.map(m => (
          <button key={m} type="button" className="px-[10px] whitespace-nowrap">{m}</button>
        ))}
      </div>
      <div className="ml-auto flex gap-[2px] text-[#7d7d8e]">
        {['最小化窗口', '还原窗口', '关闭窗口'].map((t, i) => (
          <button key={t} type="button" aria-label={t} className="flex h-6 w-[28px] items-center justify-center bg-[#dedef0]">
            <svg viewBox="0 0 14 14" className="h-[14px] w-[14px]" fill="none" stroke="currentColor" strokeWidth="2">
              <path d={['M3 11h7', 'M2 6h7v6H2zM5 5V2h7v6h-3', 'M2 3l9 9M11 3l-9 9'][i]} />
            </svg>
          </button>
        ))}
      </div>
    </nav>
  )
}

function Combo({ label, value, width, disabled, swatch, height = 'h-[39px]', border = 'border-2 border-[#9b9bab]' }) {
  return (
    <div className={`relative shrink-0 ${width} ${height}`}>
      <select
        aria-label={label}
        disabled={disabled}
        className={`h-full w-full appearance-none bg-white pr-7 pl-1 text-lg outline-none ${border} ${disabled ? 'text-[#9a9a9a]' : 'text-black'}`}
      >
        <option>{value}</option>
      </select>
      {swatch && <span className="absolute top-[6px] left-2 h-[27px] w-[57px] border-t-[3px] border-r border-b border-l-2 border-[#808080] border-r-[#ddd] border-b-[#ddd] bg-white" />}
      <ChevronDown size={17} strokeWidth={1.5} color={disabled ? '#bbb' : '#666'} className="pointer-events-none absolute top-3 right-1" />
    </div>
  )
}

function Grip() {
  return <span className="block h-6 w-[3px] shrink-0 border-r border-[#8d8da0] bg-white" />
}

function PropertyBar() {
  return (
    <div className="flex h-[58px] shrink-0 items-start border-b-[5px] border-[#74747c] bg-linear-to-b from-white via-[#cfcfe7] via-40% to-[#a3a3b7] pt-[10px]">
      <div className="-mt-[5px] mr-[14px] ml-[9px]"><Grip /></div>
      <div className="flex gap-[5px]">
        <Combo label="颜色" value="" width="w-[102px]" swatch />
        <Combo label="透明度" value="自动" width="w-[101px]" border="border border-[#e4e4ee]" />
        <Combo label="线宽" value="自动" width="w-[101px]" />
        <Combo label="线型" value="自动" width="w-[102px]" />
        <Combo label="点符号" value="自动" width="w-[66px]" />
        <Combo label="渲染" value="自动" width="w-[65px]" disabled border="border border-[#e4e4ee]" />
        <Combo label="层" value="无" width="w-[101px]" height="h-[37px]" />
      </div>
      <Tool name="brush" className="h-[38px] w-[40px]" />
      <Tool name="wand" className="h-[38px] w-[42px]" />
      <div className="-mt-[5px] mr-[10px] ml-4"><Grip /></div>
      <Tool name="mail" className="h-[38px] w-[42px]" />
      <Tool name="mailGrid" className="h-[38px] w-[42px]" />
      <Tool name="mailHelp" className="h-[38px] w-[42px]" />
    </div>
  )
}

const treeIcons = {
  body: (
    <g>
      <circle cx="27" cy="20" r="14" fill="none" stroke="#000" strokeWidth="9" strokeDasharray="7 4" />
      <circle cx="23" cy="20" r="14" fill="#0d9aa6" stroke={CYAN} strokeWidth="5" strokeDasharray="6 4" />
      <circle cx="21" cy="18" r="9" fill="#0d9aa6" stroke="#e8e800" strokeWidth="4" strokeDasharray="4 2" />
      <circle cx="20" cy="17" r="4" fill="#123" stroke="#e8e800" strokeWidth="2" />
      <circle cx="12" cy="33" r="10" fill="#0a6c78" />
      <path d="M2 29c4-7 18-6 18 3 0 6-9 8-10 2M23 33c-3 8-12 12-18 8" fill="none" stroke="#ffee00" strokeWidth="3.500" />
    </g>
  ),
  line: (
    <g>
      <path d="M4 39L40 3" stroke={N} strokeWidth="4" />
      <path d="M6 40L41 5" stroke="#45cde8" strokeWidth="1.5" strokeDasharray="4 1" />
    </g>
  ),
  point: (
    <g>
      <path d="M18 18h7v7h-7z" fill={N} />
      <path d="M27 18v9h-9" fill="none" stroke={CYAN} strokeWidth="3" />
    </g>
  ),
  helix: (
    <g fill="none">
      <path d="M2 42l10-10M34 10l9-9" stroke={TEAL} strokeWidth="2" />
      <path d="M2 34c-1-9 9-14 11-6M9 24c-1 12 18 12 14-1M15 14c-4 14 17 15 13 0" stroke="#0000ff" strokeWidth="4" />
      <path d="M11 24c0 11 13 9 12-1M17 15c0 11 11 10 11 3M4 33c0-5 4-8 8-5" stroke={CYAN} strokeWidth="2" />
      <rect x="23" y="7" width="12" height="12" rx="3" stroke={CYAN} strokeWidth="2" />
      <path d="M22 6c2-4 12-4 13 0M37 9c1 6 0 11-4 13" stroke="#0000ff" strokeWidth="3" />
      <path d="M25 5h9" stroke={CYAN} strokeWidth="2" />
    </g>
  ),
  param: (
    <g strokeWidth="2" stroke="#000">
      <path d="M1 15L15 1h29v26L29 43z" fill="#000" />
      <path d="M6 13L17 3h24l-11 10z" fill="#ffc9a8" stroke="none" />
      <path d="M13 10h17M18 6h17" strokeWidth="2.500" />
      <path d="M31 16L42 5v23L31 41z" fill={TEAL} stroke="none" />
      <path d="M33 19l4-6v9zM35 33l5-7v-5z" fill="#555" stroke="#222" strokeWidth="1" />
      <path d="M1 16h28v27H1z" fill={CREAM} />
      <path d="M7 19h17l2 3v15l-2 3H7z" fill="#5c5c5c" />
      <path d="M11 24h9v4h-9zM11 32h9v4h-9z" fill={CREAM} stroke={CREAM} strokeWidth="1" />
      <path d="M8 30h17" />
    </g>
  ),
  join: (
    <g strokeWidth="2" stroke="#000">
      <path d="M1 3h18v17H1zM23 3h18v17H23zM23 24h18v17H23z" fill="#1c6cff" />
      <path d="M4 6h12M4 10h12M4 14h12M26 5l13 13M30 5l9 9M26 10l9 9M26 38l12-12M31 39l8-8M25 33l7-7" stroke={CYAN} strokeDasharray="2 2" />
      <path d="M1 24h7c-2-4 7-4 5 0h6v6c4-1 4 6 0 5v6H1z" fill={CYAN} />
    </g>
  ),
  sweep: (
    <g strokeWidth="2" stroke="#000">
      <path d="M1 15L14 2M8 2h6v6" fill="none" />
      <path d="M5 19L32 1l6 5-16 13z" fill={TEAL} />
      <path d="M9 20c13 2 20-5 27-13l6 5v15L20 39l-2-14z" fill={CYAN} />
      <path d="M9 20c13 1 20-6 27-13" fill="none" stroke="#0000ff" />
      <path d="M5 19l12 6 2 15" fill="none" stroke="#fff" />
    </g>
  ),
  closed: (
    <g>
      <path d="M6 24L24 4c7-6 19 1 18 10-1 4-12 18-20 26z" fill={CYAN} stroke="#0000f0" strokeWidth="2.500" />
      <circle cx="10" cy="32" r="10" fill="#0a7a78" />
      <path d="M1 31c0-9 17-9 18-1 0 5-8 5-9 1M20 33c0 9-16 10-19 2" fill="none" stroke="#ffee00" strokeWidth="3.500" />
      <path d="M8 33c0-4 5-4 5 0" fill="none" stroke={N} strokeWidth="3" />
    </g>
  ),
}

const tree = [
  { level: 0, icon: 'body', label: '零件几何体', node: '-' },
  { level: 1, icon: 'line', label: '直线.1', node: '+' },
  { level: 1, icon: 'point', label: '点.1', node: '+' },
  { level: 1, icon: 'helix', label: '螺旋.1', node: '+' },
  { level: 1, icon: 'helix', label: '螺旋.2', node: '-' },
  { level: 2, icon: 'param', label: '`螺距`' },
  { level: 2, icon: 'param', label: 'TaperAngle' },
  { level: 2, icon: 'param', label: 'StartingAngle' },
  { level: 2, icon: 'param', label: '`螺距 2`' },
  { level: 2, icon: 'param', label: '`转数`' },
  { level: 1, icon: 'helix', label: '螺旋.3', node: '+' },
  { level: 1, icon: 'join', label: '接合.1', node: '-' },
  { level: 2, icon: 'param', label: '`合并距离`' },
  { level: 1, icon: 'sweep', label: '扫掠.1', node: '-', selected: true },
  { level: 2, icon: 'param', label: '`半径`' },
  { level: 1, icon: 'closed', label: '封闭曲面.1', active: true },
]

const TREE_H = 908
const rowY = i => Math.round((i + 0.5) * (TREE_H / tree.length))
const indent = { 0: 'pl-6', 1: 'pl-16', 2: 'pl-32' }

function TreeLines() {
  const d = [`M36 0V20M46 ${rowY(0)}H58`, `M76 ${rowY(0) + 16}V${rowY(15)}H99`]
  tree.forEach((row, i) => {
    if (row.level === 1 && row.node) d.push(`M88 ${rowY(i)}H99`)
    if (row.level === 2) d.push(`M115 ${rowY(i)}H140`)
  })
  ;[[4, 9], [11, 12], [13, 14]].forEach(([a, b]) => d.push(`M115 ${rowY(a) + 16}V${rowY(b) + 1}`))
  return (
    <svg className="absolute top-0 left-0 h-[908px] w-40" fill="none" stroke="#fff" strokeWidth="3" aria-hidden="true">
      <path d={d.join('')} />
    </svg>
  )
}

function NodeButton({ kind }) {
  return (
    <button type="button" aria-label={kind === '+' ? '展开' : '折叠'} className="h-[26px] w-6 shrink-0">
      <svg viewBox="0 0 24 26" className="h-full w-full">
        <circle cx="12" cy="13" r="12" fill="#8c8c8c" />
        <circle cx="10" cy="10" r="8" fill="#adadad" />
        <circle cx="7" cy="7" r="3" fill="#dcdcdc" />
        <path d={kind === '+' ? 'M3 12h18M12 4v17' : 'M3 12h18'} stroke="#000" strokeWidth="5" />
      </svg>
    </button>
  )
}

// Latin runs are a step heavier than the Chinese ones
function Label({ text }) {
  return text.split(/([\w.]+)/).filter(Boolean).map((part, i) => (
    <span key={i} className={/[\w.]/.test(part) ? 'font-normal' : 'font-light'}>{part}</span>
  ))
}

function SpecTree() {
  return (
    <div className="relative -mt-[9px]">
      <TreeLines />
      <ul className="relative grid h-[908px] auto-rows-fr">
        {tree.map((row, i) => (
          <li key={i} className={`flex items-center ${indent[row.level]}`}>
            {row.node ? <NodeButton kind={row.node} /> : row.level === 1 && <span className="w-6" />}
            <svg viewBox="0 0 44 44" className={`${row.level === 0 ? 'ml-3' : 'ml-[14px]'} h-11 w-11 shrink-0`} aria-hidden="true">
              {treeIcons[row.icon]}
            </svg>
            <span
              className={`ml-[7px] block h-10 rounded-sm text-[30px] leading-10 whitespace-pre text-white ${row.level === 2 ? 'px-[3px]' : 'px-px'} ${row.selected ? 'bg-[#ff8000]' : 'bg-[#333366]'} ${row.active ? 'underline decoration-2 underline-offset-4' : ''}`}
            >
              <Label text={row.label} />
            </span>
          </li>
        ))}
      </ul>
    </div>
  )
}

function ScrollBar() {
  return (
    <div className="flex w-[33px] shrink-0 flex-col border-r border-l-[3px] border-r-[#4a4a9a] border-l-[#8b8b8b] bg-[#7878fa]">
      <button type="button" aria-label="向上滚动" className="flex h-[30px] items-center justify-center border-b border-[#45458f]">
        <span className="border-x-9 border-b-[16px] border-x-transparent border-b-black" />
      </button>
      <div className="h-[253px] border-b border-[#b0b0ff] bg-[#5d5dc0] bg-[repeating-conic-gradient(#4f4fa6_0_25%,#6262cc_0_50%)] bg-[length:2px_2px]" />
      <div className="flex-1" />
      <button type="button" aria-label="向下滚动" className="flex h-[30px] items-center justify-center border-t-2 border-[#45458f]">
        <span className="border-x-9 border-t-[16px] border-x-transparent border-t-black" />
      </button>
    </div>
  )
}

// lowest point of each front arc, top coil to bottom coil
const arcs = [154, 160, 167, 184, 206, 229, 252, 276, 299, 322, 346, 368, 392, 415, 438, 460, 484, 503, 513, 520, 524]

function coilPoint(turn) {
  const i = Math.min(Math.floor(turn), arcs.length - 2)
  const bottom = arcs[i] + (arcs[i + 1] - arcs[i]) * (turn - i)
  const cy = bottom - 67
  const cx = 181 - (cy - 90) * 0.091
  const a = turn * 2 * Math.PI
  return [cx + 115 * Math.cos(a), cy + 66 * Math.sin(a) + 9 * Math.cos(a)]
}

function halfTurn(from) {
  const pts = []
  for (let k = 0; k <= 24; k++) pts.push(coilPoint(from + k / 48).map(v => v.toFixed(1)).join(' '))
  return 'M' + pts.join('L')
}

const turns = Array.from({ length: arcs.length - 1 }, (_, i) => i)

function Spring() {
  return (
    <svg viewBox="0 0 340 740" className="absolute top-[378px] left-[1080px] h-[740px] w-[340px]" fill="none" aria-label="弹簧">
      {turns.map(i => (
        <g key={i}>
          <path d={halfTurn(i + 0.5)} stroke="#ff8000" strokeWidth="5" />
          <path d={halfTurn(i + 0.5)} stroke="#f2e6a8" strokeWidth="1.6" />
        </g>
      ))}
      <path d="M117 352L196 362L190 426L112 416ZM183 350V378L210 381M158 328L163 340L171 335M230 393L234 408M270 398L274 410" stroke="#fff" strokeWidth="1.5" />
      {turns.map(i => (
        <g key={i}>
          <path d={halfTurn(i)} stroke="#ff8000" strokeWidth="6" />
          <path d={halfTurn(i)} stroke="#fffbd0" strokeWidth="2.400" />
        </g>
      ))}
      <path d="M186 31L124 711" stroke="#fff" strokeWidth="1.5" />
      <path d="M160 328L149 425" stroke="#fff" strokeWidth="3" strokeDasharray="26 12" />
      <circle cx="186" cy="31" r="3" fill="#000" />
      <circle cx="295" cy="103" r="2" fill="#000" />
      <circle cx="124" cy="712" r="4" fill="#000" />
    </svg>
  )
}

function Compass() {
  return (
    <div className="absolute top-0 right-0 h-[260px] w-[284px] font-['DejaVu_Sans'] text-xl leading-7 text-[#ffee00]">
      <svg viewBox="0 0 284 260" className="h-full w-full" stroke="#dcc8ff" strokeWidth="3" fill="none" aria-label="罗盘">
        <path d="M91 76C125 77 175 120 170 159L83 149z" fill="#14145a" />
        <path d="M32 177C45 166 100 165 120 178 135 187 142 197 141 203V222C135 232 125 241 115 241L24 230z" fill="#1d4864" />
        <path d="M90 57L77 203M89 60L84 150" />
        <path d="M90 57v24" strokeWidth="5" />
        <circle cx="90" cy="56" r="4" fill="#dcc8ff" />
        <path d="M68 202h14v14H68z" fill="#c80000" stroke="none" />
      </svg>
      <span className="absolute top-[26px] left-[108px]">z</span>
      <span className="absolute top-[69px] left-[112px]">y</span>
      <span className="absolute top-[127px] left-[189px]">x</span>
    </div>
  )
}

function SnippetPanel() {
  return (
    <div className="absolute top-[484px] right-[174px] h-[225px] w-[286px] bg-linear-to-b from-[#54537d] to-[#8f8eab] shadow-[0_0_8px_4px_rgba(40,40,80,0.5)]">
      <div className="ml-auto flex h-full w-14 flex-col items-center overflow-hidden bg-linear-to-r from-white via-[#cfcfe7] via-40% to-[#b4b4ca] pt-[5px]">
        <svg viewBox="0 0 32 32" className="ml-1 h-8 w-8 shrink-0" fill="#e4e4ee" stroke={GREY} strokeWidth="2" aria-hidden="true">
          <path d="M2 14h5c0 14 13 14 14 0h3v13H2zM2 14l8-9 4 3M21 14l4-10h6l-4 16-3 7" />
          <path d="M9 12c2-5 5-3 12-8l-1 9" fill="none" />
        </svg>
        <span className="mt-4 mr-3 h-[3px] w-6 shrink-0 border-b border-[#8d8da0] bg-white" />
        <span className="mt-4 ml-1 shrink-0"><Icon name="thickSurface" /></span>
        <svg viewBox="0 0 32 32" className="mt-24 ml-1 h-8 w-8 shrink-0" fill="#e4e4ee" stroke={GREY} strokeWidth="1.6" aria-hidden="true">
          <path d="M1 7l4-5 6 2v15l-4 5-6-3zM10 12l12-9v19l-12 9zM21 13l4-5 6 2v15l-4 5-6-3z" />
          <path d="M1 7l5 2v14l-5-3zM26 13l5-3v15l-5 5z" fill={GREY} />
        </svg>
      </div>
      <div className="absolute right-0 bottom-[67px] flex h-14 w-[197px] items-center border-b border-[#55556a] bg-linear-to-b from-white via-[#cfcfe7] via-30% to-[#9c9cb4] pr-2">
        <span className="mr-3 mb-5 ml-[6px]"><Grip /></span>
        <div className="flex flex-1 justify-around">
          {['split', 'thickSurface', 'closeSurface', 'sew'].map(n => <Tool key={n} name={n} className="h-9 w-9" />)}
        </div>
      </div>
      <div className="absolute right-2 bottom-[25px] flex h-8 items-center border-2 border-[#6e6e60] bg-[#ffffe1] px-1 text-lg text-black">封闭曲面</div>
    </div>
  )
}

const dressUp = [['fillet', true], ['chamfer'], ['draft', true], ['shell'], ['thickness'], ['thread'], ['removeFace', true]]

function DressUpBar() {
  return (
    <section className="absolute top-[780px] right-[528px] w-[326px] overflow-hidden rounded-[4px] shadow-[0_2px_6px_2px_rgba(40,40,80,0.5)]">
      <div className="flex h-[45px] items-center justify-between bg-[#f3f3f3] pr-px pl-3">
        <h2 className="text-lg leading-6 font-light text-[#777]">修饰特征</h2>
        <button type="button" aria-label="关闭工具栏" className="mt-2 flex h-[30px] w-[30px] items-center justify-center bg-[#dadada] text-white">
          <X size={13} strokeWidth={2.5} />
        </button>
      </div>
      <div className="flex h-[52px] items-center bg-linear-to-b from-white via-[#cfcfe7] via-30% to-[#a3a3b9]">
        <span className="mb-5 ml-[6px]"><Grip /></span>
        <div className="flex flex-1 justify-around pr-[6px] pl-[10px]">
          {dressUp.map(([n, m]) => <Tool key={n} name={n} menu={m} className="h-10 w-9" />)}
        </div>
      </div>
    </section>
  )
}

const dialogButton = 'flex h-[35px] items-center gap-[6px] border-2 bg-[#cfcfe7] px-[9px] text-lg text-black shadow-[inset_2px_2px_1px_#fff,inset_-3px_-3px_2px_#8d8db0]'

function CloseSurfaceDialog() {
  return (
    <div className="absolute right-[63px] bottom-[27px] flex h-[201px] w-[469px] items-start border-3 border-[#ff3838] pt-[7px] pl-9">
      <form role="dialog" aria-label="定义封闭曲面" className="flex h-[149px] w-[365px] flex-col overflow-hidden rounded-lg bg-[#fde6c0] shadow-[0_8px_30px_6px_rgba(50,50,80,0.5)]">
        <div className="flex h-[37px] items-center bg-[#f3f3f3] pl-[6px] text-lg font-light text-[#777]">
          <h2>定义封闭曲面</h2>
          <button type="button" aria-label="帮助" className="ml-auto">?</button>
          <button type="button" aria-label="关闭对话框" className="mr-[22px] ml-[54px]"><X size={24} strokeWidth={1.2} /></button>
        </div>
        <div className="mt-[18px] flex items-center pl-[18px]">
          <label htmlFor="target" className="w-[132px] text-lg whitespace-nowrap">要封闭的对象：</label>
          <input id="target" defaultValue="扫掠.1" className="h-8 w-[168px] border-2 border-[#9c9ca0] bg-white px-[3px] text-lg outline-none" />
        </div>
        <div className="mt-auto flex items-end">
          <svg viewBox="0 0 72 50" className="h-[50px] w-[72px]" aria-hidden="true">
            <defs>
              <radialGradient id="glow"><stop offset="0" stopColor="#ff9a2a" /><stop offset="0.5" stopColor="#fbcf6e" /><stop offset="1" stopColor="#fde6c0" stopOpacity="0" /></radialGradient>
              <linearGradient id="globe" x1="0" y1="1" x2="1" y2="0"><stop offset="0" stopColor="#2a2f38" /><stop offset="0.300" stopColor="#4a5a66" /><stop offset="0.500" stopColor="#5aa6cc" /><stop offset="1" stopColor="#bfe6f5" /></linearGradient>
            </defs>
            <circle cx="38" cy="32" r="34" fill="url(#glow)" />
            <circle cx="44" cy="31" r="9" fill="#ffa54a" />
            <path d="M0 25c25-4 50 6 64 25H0z" fill="url(#globe)" />
          </svg>
          <div className="mr-[11px] mb-[11px] ml-auto flex gap-[10px]">
            <button type="submit" className={`${dialogButton} border-[#77777d]`}>
              <span className="h-[18px] w-[18px] rounded-full bg-radial-[at_35%_30%] from-[#9dff8d] via-[#12a012] to-[#075007]" />确定
            </button>
            <button type="button" className={`${dialogButton} border-[#e6e6f2] border-r-[#8585a0] border-b-[#8585a0]`}>
              <span className="h-[18px] w-[18px] rounded-full bg-radial-[at_35%_30%] from-[#ffb5a5] via-[#d82020] to-[#5a0808]" />取消
            </button>
          </div>
        </div>
      </form>
    </div>
  )
}

function Viewport() {
  return (
    <main className="relative min-w-0 flex-1 overflow-hidden bg-linear-to-b from-[#333366] via-[#474673] via-66% to-[#aaaabf]">
      <div className="flex h-full">
        <ScrollBar />
        <SpecTree />
      </div>
      <p className="absolute top-[228px] left-[731px] text-[36px] leading-[54px] font-light whitespace-nowrap text-[#ff3838]">
        进入零件设计模块，对曲面进行封闭得到实体
      </p>
      <Spring />
      <Compass />
      <div className="absolute right-0 bottom-10 h-[70px] w-[80px] text-xl leading-4 text-white">
        <svg viewBox="0 0 80 70" className="h-full w-full" fill="none" stroke="#fff" strokeWidth="2" aria-hidden="true">
          <path d="M13 36V55L54 60M20 22L14 40" />
        </svg>
        <span className="absolute top-0 left-[15px]">z</span>
        <span className="absolute top-4 left-[15px]">y</span>
        <span className="absolute top-[46px] left-[56px]">x</span>
      </div>
      <SnippetPanel />
      <DressUpBar />
      <CloseSurfaceDialog />
      <svg viewBox="0 0 216 236" className="absolute right-[34px] bottom-[232px] h-[236px] w-[216px]" aria-hidden="true">
        <path d="M2 2l20 7-5 4L214 233 10 19l-5 5z" fill="#ff3838" stroke="#ff3838" />
      </svg>
    </main>
  )
}

function SideGrip() {
  return (
    <div className="flex h-[14px] shrink-0 items-center">
      <span className="ml-px h-[4px] w-6 border-r border-b-2 border-[#8d8da0] bg-white" />
    </div>
  )
}

const features = [
  ['pad', true], ['pocket', true], ['shaft'], ['groove'], ['hole'],
  ['rib'], ['slot'], ['solidCombine', true], ['multiPad'], ['removePad'],
]

function SideBar() {
  return (
    <aside className="relative flex w-14 shrink-0 flex-col overflow-hidden border-l-2 border-white bg-linear-to-r from-white via-[#cfcfe7] via-35% to-[#b9b9cf] pl-[3px]">
      <SideGrip />
      <div className="flex h-14 flex-col items-center"><Tool name="gear" /></div>
      <SideGrip />
      <div className="flex h-[180px] flex-col items-center pt-1">
        {['specNew', 'specLink', 'specBox', 'specFilter'].map(n => <Tool key={n} name={n} />)}
      </div>
      <SideGrip />
      <div className="flex h-14 justify-center pt-1"><Tool name="cursor" menu /></div>
      <SideGrip />
      <div className="flex h-14 justify-center pt-1"><Tool name="sketch" menu /></div>
      <SideGrip />
      <div className="flex h-[440px] flex-col items-center justify-center">
        {features.map(([n, m]) => <Tool key={n} name={n} menu={m} className="h-[43px] w-[42px]" />)}
      </div>
      <SideGrip />
      <div className="flex h-14 items-end justify-center pb-1"><Tool name="closeSurfaceHot" menu /></div>
      <SideGrip />
      <div className="flex h-[54px] items-center justify-center border-b-2 border-[#9a9aac]"><Tool name="translate" menu /></div>
      <div className="flex h-[99px] flex-col items-center justify-center border-b-2 border-[#9a9aac]">
        <Tool name="mirror" className="h-11 w-[42px]" />
        <Tool name="pattern" menu className="h-11 w-[42px]" />
      </div>
      <div className="flex h-14 items-center justify-center"><Tool name="scale" menu /></div>
    </aside>
  )
}

function ToolGroup({ names, width }) {
  return (
    <div className={`flex shrink-0 ${width}`}>
      <span className="-mt-2 flex w-7 shrink-0 justify-center pl-[6px]"><Grip /></span>
      {names.map(n => <Tool key={n} name={n} className="h-8 flex-1" />)}
    </div>
  )
}

function StandardBar() {
  return (
    <footer className="flex h-11 shrink-0 items-start overflow-hidden bg-linear-to-b from-white to-[#cfcfe7] to-35% pt-4">
      <div className="-ml-[9px] flex">
        <ToolGroup width="w-[455px]" names={['file', 'open', 'save', 'print', 'cut', 'copy', 'paste', 'undo', 'redo', 'help']} />
        <ToolGroup width="w-[319px]" names={['formula', 'comment', 'linkGrey', 'table', 'relations', 'lock', 'equiv']} />
        <ToolGroup width="w-[539px]" names={['plane', 'fitAll', 'pan', 'rotate', 'zoomIn', 'zoomOut', 'normal', 'multiView', 'isoView', 'shading', 'hideShow', 'swapSpace']} />
        <ToolGroup width="w-[70px]" names={['plot']} />
        <ToolGroup width="w-[154px]" names={['measure', 'caliper', 'weight']} />
        <ToolGroup width="w-[73px]" names={['camera']} />
        <ToolGroup width="w-[371px]" names={['update', 'updateHand', 'axis', 'tolerance', 'catalog', 'flash', 'stack', 'bodyBlue']} />
      </div>
      <Combo label="工作对象" value="零件几何体" width="w-[264px]" height="h-[37px]" border="border border-[#e4e4ee]" />
      <ToolGroup width="w-[197px]" names={['draftUp', 'curvature', 'analysis', 'wallThickness']} />
      <span className="-mt-2 ml-4"><Grip /></span>
      <span className="-mt-3 ml-4 text-2xl leading-8 text-[#8a8aa0]">»</span>
      <div className="-mt-3 mr-2 ml-auto flex w-[62px] flex-col items-center">
        <svg viewBox="0 0 60 32" className="h-8 w-[60px] shrink-0" fill="none" strokeWidth="3" aria-hidden="true">
          <path d="M12 2c11-3 15 0 9 5l-5 4" stroke="#e03a30" />
          <path d="M10 15c12-3 17 1 10 9-4 4-9 6-16 6l6-11" stroke="#5a4a9a" />
          <path d="M42 12c-9 0-12 4-8 8 5 4 3 9-7 10" stroke="#f0a020" />
        </svg>
        <span className="text-base leading-5 font-bold text-[#4a3a8a] italic">CATIA</span>
      </div>
    </footer>
  )
}

export default function App() {
  return (
    <div className="flex h-screen flex-col overflow-hidden bg-[#cfcfe7] font-['Noto_Sans','Noto_Sans_CJK_SC',sans-serif]">
      <TitleBar />
      <MenuBar />
      <PropertyBar />
      <div className="relative flex min-h-0 flex-1">
        <Viewport />
        <SideBar />
        <span className="absolute top-[873px] right-0 h-[63px] w-[70px] border-3 border-[#ff3838]" />
      </div>
      <StandardBar />
    </div>
  )
}
